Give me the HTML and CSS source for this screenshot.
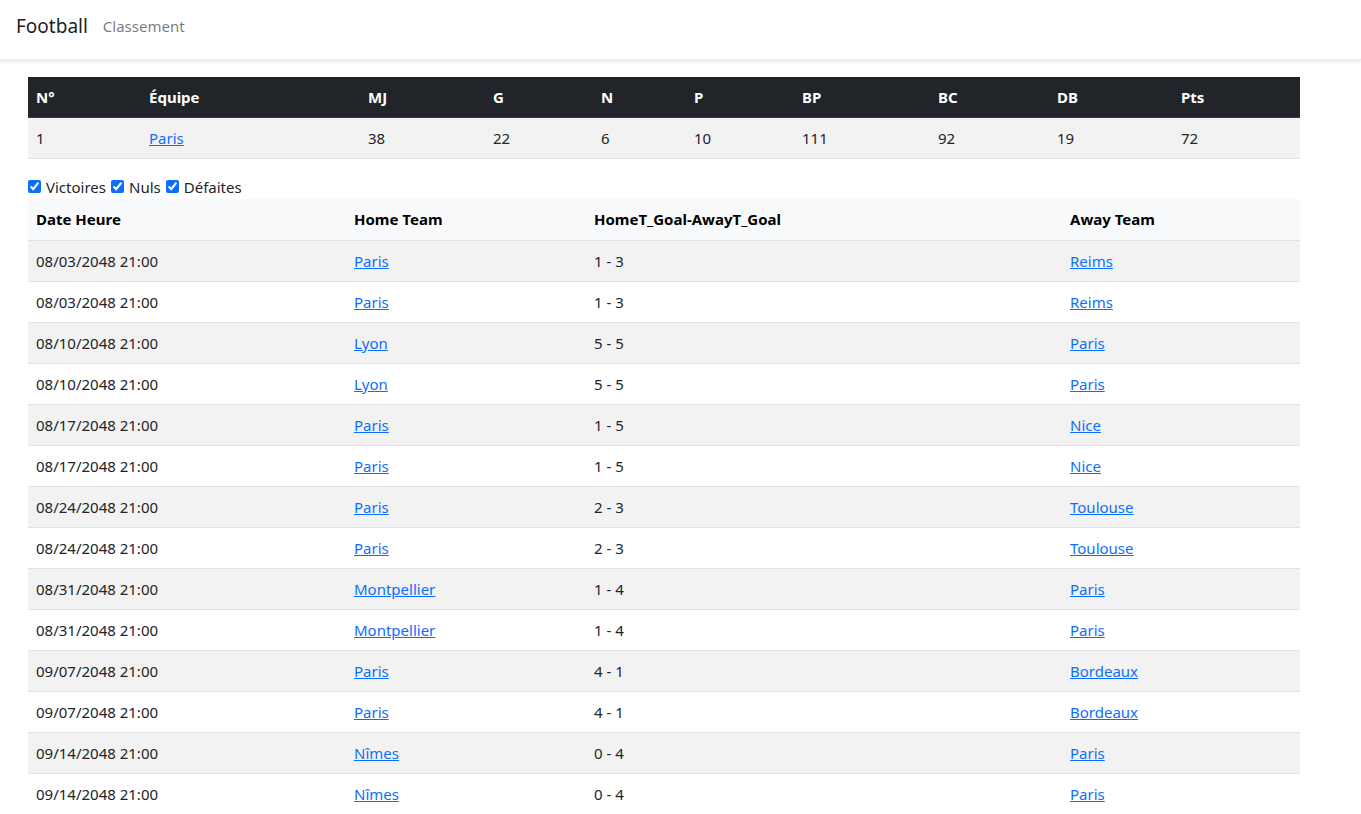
FILE: index.html
```html
<!DOCTYPE html>
<html lang="fr">
<head>
<meta charset="utf-8">
<title>Football</title>
<link rel="stylesheet" href="styles.css">
</head>
<body>
<nav class="navbar">
  <a class="brand" href="#">Football</a>
  <a class="nav-link" href="#">Classement</a>
</nav>
<main class="container">
  <table class="table standings">
    <colgroup>
      <col style="width:113px"><col style="width:219px"><col style="width:125px"><col style="width:108px"><col style="width:93px">
      <col style="width:108px"><col style="width:136px"><col style="width:119px"><col style="width:124px"><col style="width:127px">
    </colgroup>
    <thead>
      <tr><th>N°</th><th>Équipe</th><th>MJ</th><th>G</th><th>N</th><th>P</th><th>BP</th><th>BC</th><th>DB</th><th>Pts</th></tr>
    </thead>
    <tbody>
      <tr class="odd"><td>1</td><td><a href="#">Paris</a></td><td>38</td><td>22</td><td>6</td><td>10</td><td>111</td><td>92</td><td>19</td><td>72</td></tr>
    </tbody>
  </table>

  <div class="filters">
    <label><input type="checkbox" checked> Victoires</label>
    <label><input type="checkbox" checked> Nuls</label>
    <label><input type="checkbox" checked> Défaites</label>
  </div>

  <table class="table matches">
    <colgroup>
      <col style="width:318px"><col style="width:240px"><col style="width:476px"><col style="width:238px">
    </colgroup>
    <thead>
      <tr><th>Date Heure</th><th>Home Team</th><th>HomeT_Goal-AwayT_Goal</th><th>Away Team</th></tr>
    </thead>
    <tbody>
      <tr class="odd"><td>08/03/2048 21:00</td><td><a href="#">Paris</a></td><td>1 - 3</td><td><a href="#">Reims</a></td></tr>
      <tr><td>08/03/2048 21:00</td><td><a href="#">Paris</a></td><td>1 - 3</td><td><a href="#">Reims</a></td></tr>
      <tr class="odd"><td>08/10/2048 21:00</td><td><a href="#">Lyon</a></td><td>5 - 5</td><td><a href="#">Paris</a></td></tr>
      <tr><td>08/10/2048 21:00</td><td><a href="#">Lyon</a></td><td>5 - 5</td><td><a href="#">Paris</a></td></tr>
      <tr class="odd"><td>08/17/2048 21:00</td><td><a href="#">Paris</a></td><td>1 - 5</td><td><a href="#">Nice</a></td></tr>
      <tr><td>08/17/2048 21:00</td><td><a href="#">Paris</a></td><td>1 - 5</td><td><a href="#">Nice</a></td></tr>
      <tr class="odd"><td>08/24/2048 21:00</td><td><a href="#">Paris</a></td><td>2 - 3</td><td><a href="#">Toulouse</a></td></tr>
      <tr><td>08/24/2048 21:00</td><td><a href="#">Paris</a></td><td>2 - 3</td><td><a href="#">Toulouse</a></td></tr>
      <tr class="odd"><td>08/31/2048 21:00</td><td><a href="#">Montpellier</a></td><td>1 - 4</td><td><a href="#">Paris</a></td></tr>
      <tr><td>08/31/2048 21:00</td><td><a href="#">Montpellier</a></td><td>1 - 4</td><td><a href="#">Paris</a></td></tr>
      <tr class="odd"><td>09/07/2048 21:00</td><td><a href="#">Paris</a></td><td>4 - 1</td><td><a href="#">Bordeaux</a></td></tr>
      <tr><td>09/07/2048 21:00</td><td><a href="#">Paris</a></td><td>4 - 1</td><td><a href="#">Bordeaux</a></td></tr>
      <tr class="odd"><td>09/14/2048 21:00</td><td><a href="#">Nîmes</a></td><td>0 - 4</td><td><a href="#">Paris</a></td></tr>
      <tr><td>09/14/2048 21:00</td><td><a href="#">Nîmes</a></td><td>0 - 4</td><td><a href="#">Paris</a></td></tr>
    </tbody>
  </table>
</main>
</body>
</html>
```

FILE: styles.css
```css
* { box-sizing: border-box; }
html, body { margin: 0; padding: 0; }
body {
  font-family: "Noto Sans", "Liberation Sans", sans-serif;
  font-size: 15px;
  line-height: 24px;
  color: #212529;
  background: #fff;
}
a { color: #0d6efd; text-decoration: underline; }

.navbar {
  height: 60px;
  display: flex;
  align-items: center;
  padding: 0 16px;
  background: #fff;
  box-shadow: 0 2px 4px rgba(0,0,0,0.09);
  border-bottom: 1px solid #e9e9ec;
  margin-bottom: 17px;
}
.brand {
  font-size: 19px;
  color: rgba(0,0,0,0.9);
  text-decoration: none;
  margin-right: 15px;
  padding-bottom: 8px;
}
.nav-link {
  font-size: 15px;
  color: rgba(0,0,0,0.55);
  text-decoration: none;
  padding-bottom: 8px;
}

.container {
  width: 1272px;
  margin-left: 28px;
}

.table {
  width: 1272px;
  border-collapse: collapse;
  table-layout: fixed;
}
.table th, .table td {
  text-align: left;
  padding: 8px;
  height: 41px;
  border-bottom: 1px solid #dee2e6;
  white-space: nowrap;
  vertical-align: middle;
}
.table th { font-weight: 700; }
.table tr.odd td { background: #f2f2f2; }

.standings { margin-bottom: 15px; }
.standings th, .standings td { height: 40px; }
.standings thead th {
  background: #212529;
  color: #fff;
  border-bottom-color: #373b3e;
}

.filters {
  display: flex;
  align-items: center;
  gap: 5px;
  height: 25px;
}
.filters label { display: flex; align-items: center; gap: 5px; }
.filters input {
  margin: 0;
  width: 13px;
  height: 13px;
  accent-color: #0d6efd;
}

.matches thead th {
  background: #f8f9fa;
  color: #000;
}
```
